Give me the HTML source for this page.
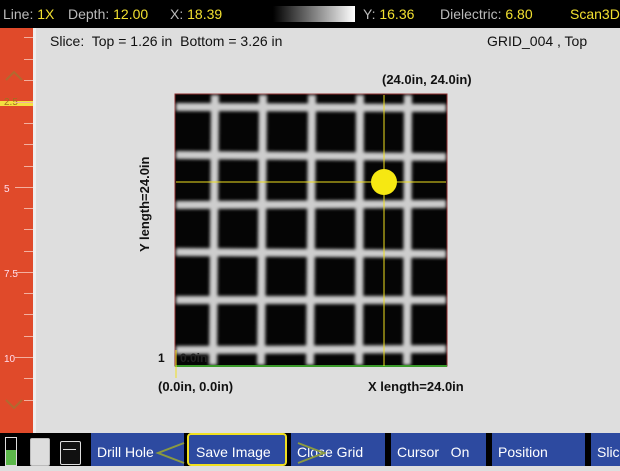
<!DOCTYPE html>
<html><head><style>
body{margin:0;width:620px;height:466px;overflow:hidden;background:#dedede;font-family:"Liberation Sans",sans-serif;position:relative}
.top{position:absolute;left:0;top:0;width:620px;height:28px;background:#000;color:#bbb;font-size:14px;line-height:28px}
.top span{position:absolute;white-space:nowrap}
.y{color:#f2e030}
.ruler{position:absolute;left:0;top:28px;width:33px;height:405px;background:#e04a2a}
.strip{position:absolute;left:33px;top:28px;width:3px;height:405px;background:#eee}
.tick{position:absolute;height:1px;background:#f3b0a0;right:0}
.lab{position:absolute;left:4px;color:#fde;font-size:10px}
.bot{position:absolute;left:0;top:433px;width:620px;height:33px;background:#000}
.btn{position:absolute;top:0;height:33px;background:#2d4aa0;color:#fff;font-size:14px;line-height:38px;padding-left:6px;box-sizing:border-box}
.t{position:absolute;font-size:13px;color:#111;white-space:nowrap}
</style></head><body>
<div class="top">
<span style="left:3px">Line: <b class="y" style="font-weight:normal">1X</b></span>
<span style="left:68px">Depth: <span class="y" style="position:static">12.00</span></span>
<span style="left:170px">X: <span class="y" style="position:static">18.39</span></span>
<div style="position:absolute;left:273px;top:6px;width:82px;height:16px;background:linear-gradient(90deg,#000,#fff)"></div>
<span style="left:363px">Y: <span class="y" style="position:static">16.36</span></span>
<span style="left:440px">Dielectric: <span class="y" style="position:static">6.80</span></span>
<span style="left:570px" class="y">Scan3D</span>
</div>
<div class="ruler">
<svg width="33" height="405" style="position:absolute;left:0;top:0">
<polyline points="6,52 14,44 22,52" fill="none" stroke="#b06a30" stroke-width="2"/>
<polyline points="6,372 14,380 22,372" fill="none" stroke="#b06a30" stroke-width="2"/>
<rect x="0" y="73" width="33" height="5" fill="#f4e040"/>
</svg>
<div class="lab" style="top:69px;color:#a07020">2.5</div>
<div class="lab" style="top:156px">5</div>
<div class="lab" style="top:241px">7.5</div>
<div class="lab" style="top:326px">10</div>
<div class="tick" style="top:9px;width:9px"></div><div class="tick" style="top:31px;width:9px"></div>
<div class="tick" style="top:52px;width:9px"></div><div class="tick" style="top:74px;width:18px"></div>
<div class="tick" style="top:95px;width:9px"></div><div class="tick" style="top:116px;width:9px"></div>
<div class="tick" style="top:138px;width:9px"></div><div class="tick" style="top:159px;width:18px"></div>
<div class="tick" style="top:180px;width:9px"></div><div class="tick" style="top:201px;width:9px"></div>
<div class="tick" style="top:223px;width:9px"></div><div class="tick" style="top:244px;width:18px"></div>
<div class="tick" style="top:265px;width:9px"></div><div class="tick" style="top:286px;width:9px"></div>
<div class="tick" style="top:308px;width:9px"></div><div class="tick" style="top:329px;width:18px"></div>
<div class="tick" style="top:350px;width:9px"></div><div class="tick" style="top:372px;width:9px"></div>
</div>
<div class="strip"></div>
<div class="t" style="left:50px;top:33px;font-size:14px">Slice:&nbsp; Top = 1.26 in&nbsp; Bottom = 3.26 in</div>
<div class="t" style="left:487px;top:33px;font-size:14px">GRID_004 , Top</div>
<div class="t" style="left:382px;top:72px;font-weight:bold">(24.0in, 24.0in)</div>
<div class="t" style="left:158px;top:379px;font-weight:bold">(0.0in, 0.0in)</div>
<div class="t" style="left:368px;top:379px;font-weight:bold">X length=24.0in</div>
<div class="t" style="left:137px;top:252px;font-weight:bold;transform:rotate(-90deg);transform-origin:0 0">Y length=24.0in</div>
<svg width="620" height="466" style="position:absolute;left:0;top:0">
<defs><filter id="b"><feGaussianBlur stdDeviation="1.5"/></filter></defs>
<rect x="175" y="94" width="272" height="272" fill="#050505" stroke="#8a2a2a"/>
<g stroke="#d8d8d8" stroke-width="8" filter="url(#b)" opacity="0.95">
<line x1="215" y1="95" x2="213" y2="365"/><line x1="263" y1="95" x2="261" y2="365"/>
<line x1="312" y1="95" x2="310" y2="365"/><line x1="360" y1="95" x2="359" y2="365"/>
<line x1="408" y1="95" x2="407" y2="365"/>
<line x1="176" y1="107" x2="446" y2="108"/><line x1="176" y1="155" x2="446" y2="157"/>
<line x1="176" y1="205" x2="446" y2="204"/><line x1="176" y1="252" x2="446" y2="254"/>
<line x1="176" y1="300" x2="446" y2="300"/><line x1="176" y1="350" x2="446" y2="349"/>
</g>
<line x1="175" y1="366" x2="447" y2="366" stroke="#3a9a2a" stroke-width="2"/>
<line x1="384" y1="95" x2="384" y2="366" stroke="#f0e020" stroke-width="1"/>
<line x1="176" y1="182" x2="446" y2="182" stroke="#f0e020" stroke-width="1"/>
<line x1="176" y1="350" x2="176" y2="378" stroke="#f0e020" stroke-width="1"/>
<circle cx="384" cy="182" r="13" fill="#f6e812"/>
<text x="158" y="362" font-size="12" font-weight="bold" fill="#111" font-family="Liberation Sans">1</text>
<text x="180" y="362" font-size="12" font-weight="bold" fill="#222" font-family="Liberation Sans">0.0in</text>
</svg>
<div class="bot">
<div style="position:absolute;left:5px;top:4px;width:10px;height:27px;border:1px solid #ddd;background:linear-gradient(#000 45%,#5cb84a 45%)"></div>
<div style="position:absolute;left:30px;top:5px;width:18px;height:26px;border:1px solid #bbb;border-radius:2px;background:#ddd"></div>
<div style="position:absolute;left:60px;top:8px;width:19px;height:22px;border:1px solid #ddd;border-radius:2px;background:#111"></div>
<div style="position:absolute;left:63px;top:16px;width:13px;height:1px;background:#ddd"></div>
<div class="btn" style="left:91px;width:93px">Drill Hole</div>
<div class="btn" style="left:187px;width:100px;border:2px solid #f0e020;border-radius:4px;padding-left:7px;line-height:35px">Save Image</div>
<div class="btn" style="left:291px;width:94px">Close Grid</div>
<div class="btn" style="left:391px;width:95px">Cursor&nbsp;&nbsp; On</div>
<div class="btn" style="left:492px;width:93px">Position</div>
<div class="btn" style="left:591px;width:29px">Slic</div>
<svg width="620" height="33" style="position:absolute;left:0;top:0">
<polyline points="184,10 158,20 184,30" fill="none" stroke="#8a9a40" stroke-width="2"/>
<polyline points="298,10 324,20 298,30" fill="none" stroke="#8a9a40" stroke-width="2"/>
</svg>
</div>
</body></html>
